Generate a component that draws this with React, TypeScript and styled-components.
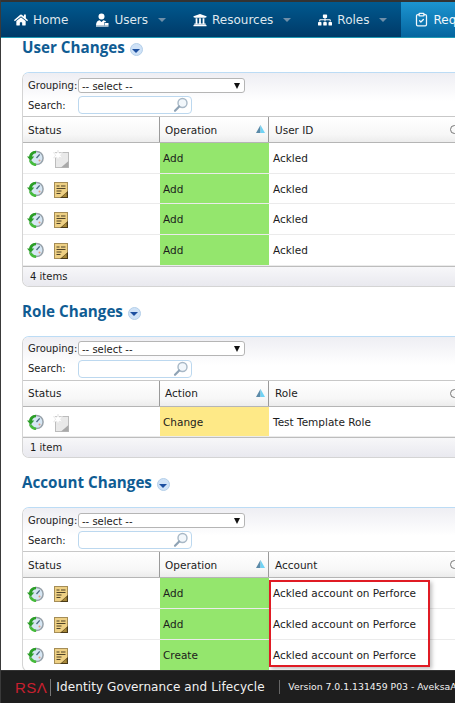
import React from 'react'
import styled, { createGlobalStyle } from 'styled-components'
import { FaHome, FaUniversity, FaSitemap } from 'react-icons/fa'
import { LuClipboardCheck } from 'react-icons/lu'

const GlobalStyle = createGlobalStyle`
  html, body { margin: 0; padding: 0; background: #fff; }
  body { font-family: "DejaVu Sans", "Liberation Sans", sans-serif; color: #1c1c1c; }
`

const UserIcon = () => (
  <svg width="14" height="14" viewBox="0 0 14 14" fill="#fff">
    <circle cx="6.5" cy="3.4" r="3" />
    <path d="M1 12.5c0-3 1.4-5 3.6-5.2L6.5 9l1.9-1.7c1.2.1 2.2.8 2.8 1.8L9 9.6v2.9z" />
    <rect x="9.5" y="10" width="4" height="2.5" />
    <rect x="1" y="12.6" width="12.5" height="1" />
  </svg>
)

const StatusIcon = () => (
  <svg width="17" height="17" viewBox="0 0 17 17">
    <circle cx="9.5" cy="8" r="6.6" fill="#d6e6f3" stroke="#98a2aa" strokeWidth="1.5" />
    <path d="M9.5 8l3.2-3.6" stroke="#4c6a80" strokeWidth="1.3" />
    <circle cx="12.5" cy="10.5" r="1" fill="#e49a7c" />
    <path d="M9 .8C5 .9 2.500 3.200 2.200 6.500L0 6.500l3.600 4.300 3.700-4.300H5.100C5.400 4.700 6.900 3.500 9 3.300z" fill="#2b9f27" />
    <path d="M1.800 9.500C2.300 13.400 5.200 16 9 16l.3-2.600c-2.200 0-3.900-1.200-4.700-3.100L3.600 11.500z" fill="#45bb3b" />
  </svg>
)

const NoteIcon = () => (
  <svg width="14" height="16" viewBox="0 0 14 16">
    <rect x="0.5" y="0.5" width="13" height="15" fill="#eed084" stroke="#a58d57" />
    <path d="M2.500 4h3M7 4h4.500M2.500 6.500h9M2.500 9h5M2.500 11.500h4" stroke="#4f4327" strokeWidth="1" />
    <path d="M14 9v7H6z" fill="#4a3a18" />
    <path d="M12.500 10.500L8 15h5z" fill="#a88838" />
  </svg>
)

const NewNoteIcon = () => (
  <svg width="18" height="18" viewBox="0 0 18 18">
    <rect x="3.500" y="2.500" width="13" height="15" fill="#e9e9e9" stroke="#bcbcbc" />
    <path d="M16.500 11v6.500H9z" fill="#a9a9a9" />
    <path d="M6 0l1.100 3.200L10.500 2.500 8.500 5.200 10.500 8 7.100 7.200 6 10.500 4.900 7.200 1.500 8 3.500 5.200 1.500 2.500 4.900 3.200z" fill="#fff" stroke="#e2e2e2" strokeWidth="0.6" />
  </svg>
)

const MagnifierIcon = () => (
  <svg width="16" height="16" viewBox="0 0 16 16" fill="none">
    <circle cx="9.500" cy="6" r="4.500" fill="#f2f7fb" stroke="#a8b8c6" strokeWidth="1.400" />
    <path d="M6.200 9.500L2 13.800" stroke="#8fa3b5" strokeWidth="2.200" strokeLinecap="round" />
  </svg>
)

const SortIcon = () => (
  <svg width="9" height="8" viewBox="0 0 9 8">
    <path d="M4.500 0L0 8h4.500z" fill="#5b8aa8" />
    <path d="M4.500 0L9 8H4.500z" fill="#6fd3f5" />
  </svg>
)

const navItems = [
  { label: 'Home', icon: <FaHome size={14} />, caret: false },
  { label: 'Users', icon: <UserIcon />, caret: true },
  { label: 'Resources', icon: <FaUniversity size={14} />, caret: true },
  { label: 'Roles', icon: <FaSitemap size={14} />, caret: true },
]

const sections = [
  {
    title: 'User Changes',
    opColumn: 'Operation',
    nameColumn: 'User ID',
    footer: '4 items',
    rows: [
      { op: 'Add', name: 'Ackled', isNew: true },
      { op: 'Add', name: 'Ackled' },
      { op: 'Add', name: 'Ackled' },
      { op: 'Add', name: 'Ackled' },
    ],
  },
  {
    title: 'Role Changes',
    opColumn: 'Action',
    nameColumn: 'Role',
    footer: '1 item',
    rows: [{ op: 'Change', name: 'Test Template Role', isNew: true, changed: true }],
  },
  {
    title: 'Account Changes',
    opColumn: 'Operation',
    nameColumn: 'Account',
    highlighted: true,
    rows: [
      { op: 'Add', name: 'Ackled account on Perforce' },
      { op: 'Add', name: 'Ackled account on Perforce' },
      { op: 'Create', name: 'Ackled account on Perforce' },
    ],
  },
]

const App = () => {
  return (
    <Page>
      <GlobalStyle />
      <NavBar>
        {navItems.map((item) => (
          <NavItem key={item.label}>
            <NavIcon>{item.icon}</NavIcon>
            {item.label}
            {item.caret && <Caret />}
          </NavItem>
        ))}
        <ActiveTab>
          <LuClipboardCheck size={15} />
          <span>Requests</span>
        </ActiveTab>
      </NavBar>

      <Main>
        {sections.map((section) => (
          <Section key={section.title}>
            <TitleRow>
              <Title>{section.title}</Title>
              <Toggle>
                <ToggleArrow />
              </Toggle>
            </TitleRow>
            <Card>
              <FilterPanel>
                <FilterRow>
                  <FilterLabel>Grouping:</FilterLabel>
                  <SelectBox>
                    -- select --
                    <SelectArrow />
                  </SelectBox>
                </FilterRow>
                <FilterRow>
                  <FilterLabel>Search:</FilterLabel>
                  <SearchBox>
                    <MagnifierIcon />
                  </SearchBox>
                </FilterRow>
              </FilterPanel>
              <HeaderRow>
                <HeaderCell>Status</HeaderCell>
                <HeaderCell>
                  {section.opColumn}
                  <SortSlot>
                    <SortIcon />
                  </SortSlot>
                </HeaderCell>
                <NameHeader>
                  {section.nameColumn}
                  <ColumnMenu />
                </NameHeader>
              </HeaderRow>
              <Body>
                {section.rows.map((row, i) => (
                  <Row key={i}>
                    <StatusCell>
                      <StatusIcon />
                      <NoteSlot>{row.isNew ? <NewNoteIcon /> : <NoteIcon />}</NoteSlot>
                    </StatusCell>
                    <OpCell $changed={row.changed}>{row.op}</OpCell>
                    <NameCell>{row.name}</NameCell>
                  </Row>
                ))}
                {section.highlighted && <RedBox />}
              </Body>
              {section.footer && <CardFooter>{section.footer}</CardFooter>}
            </Card>
          </Section>
        ))}
      </Main>

      <FooterBar>
        <Logo>RSΛ</Logo>
        <ProductName>Identity Governance and Lifecycle</ProductName>
        <VersionText>Version 7.0.1.131459 P03 - AveksaAdmin</VersionText>
      </FooterBar>
    </Page>
  )
}

const Page = styled.div`
  width: 455px;
  height: 703px;
  display: flex;
  flex-direction: column;
  overflow: hidden;
  background: #fff;
  border-left: 1px solid #3a3a3a;
  box-sizing: border-box;
`

const NavBar = styled.nav`
  flex: none;
  height: 38px;
  box-sizing: border-box;
  border-top: 2px solid #333;
  border-bottom: 1px solid #1f9bb5;
  background: linear-gradient(#00598f, #003a68);
  display: flex;
  align-items: stretch;
  padding-left: 13px;
  color: #dfe7ee;
  font-size: 12px;
  white-space: nowrap;
`

const NavItem = styled.div`
  display: flex;
  align-items: center;
  margin-right: 27px;
`

const NavIcon = styled.span`
  display: flex;
  color: #fff;
  margin-right: 5px;
`

const Caret = styled.span`
  width: 0;
  height: 0;
  margin-left: 10px;
  border-left: 4px solid transparent;
  border-right: 4px solid transparent;
  border-top: 4px solid #6f8fa9;
`

const ActiveTab = styled.div`
  margin-left: -13px;
  padding-left: 13px;
  flex: 1;
  display: flex;
  align-items: center;
  gap: 4px;
  background: linear-gradient(#1c95d1, #05659f);
  color: #f2f7fb;
  overflow: hidden;
  svg {
    flex: none;
  }
`

const Main = styled.main`
  flex: 1;
  min-height: 0;
  overflow: hidden;
  padding-left: 21px;
`

const Section = styled.section`
  width: 470px;
  margin-bottom: 15px;
`

const TitleRow = styled.div`
  height: 34px;
  display: flex;
  align-items: flex-start;
  gap: 5px;
`

const Title = styled.h2`
  margin: 0;
  font-family: "Open Sans", "Liberation Sans", sans-serif;
  font-size: 15.200px;
  line-height: 18px;
  font-weight: 700;
  color: #0f5c93;
`

const Toggle = styled.span`
  margin-top: 5px;
  width: 13px;
  height: 13px;
  border-radius: 50%;
  background: #cfe2f7;
  border: 1px solid #b4cfe9;
  box-sizing: border-box;
  display: flex;
  align-items: center;
  justify-content: center;
`

const ToggleArrow = styled.span`
  width: 0;
  height: 0;
  margin-top: 2px;
  border-left: 4px solid transparent;
  border-right: 4px solid transparent;
  border-top: 4px solid #1c4fa0;
`

const Card = styled.div`
  border: 1px solid #d4d4d4;
  border-top-color: #bcdcf5;
  border-radius: 7px 0 0 7px;
  overflow: hidden;
  background: #fff;
`

const FilterPanel = styled.div`
  height: 43px;
  box-sizing: border-box;
  padding: 4px 0 0 5px;
  background: linear-gradient(#eeeef3, #fff 65%);
  display: flex;
  flex-direction: column;
  gap: 4px;
`

const FilterRow = styled.div`
  display: flex;
  align-items: center;
  height: 16px;
`

const FilterLabel = styled.span`
  width: 50px;
  font-size: 10px;
  color: #222;
`

const SelectBox = styled.div`
  position: relative;
  width: 167px;
  height: 15px;
  box-sizing: border-box;
  border: 1px solid #b5b5b5;
  border-radius: 3px;
  background: #fff;
  font-size: 10px;
  line-height: 15px;
  padding-left: 3px;
`

const SelectArrow = styled.span`
  position: absolute;
  right: 4px;
  top: 4px;
  width: 0;
  height: 0;
  border-left: 3.500px solid transparent;
  border-right: 3.500px solid transparent;
  border-top: 6px solid #111;
`

const SearchBox = styled.div`
  width: 114px;
  height: 18px;
  box-sizing: border-box;
  border: 1px solid #bcd8ef;
  border-radius: 4px;
  background: #fff;
  display: flex;
  align-items: center;
  justify-content: flex-end;
  padding-right: 2px;
`

const HeaderRow = styled.div`
  height: 27px;
  box-sizing: border-box;
  display: grid;
  grid-template-columns: 137px 109px 1fr;
  border-top: 1px solid #c8c8c8;
  border-bottom: 1px solid #b5b5b5;
  background: linear-gradient(#fff, #f7f7f7 70%, #ececec);
  font-size: 10.500px;
`

const HeaderCell = styled.div`
  position: relative;
  display: flex;
  align-items: center;
  padding-left: 5px;
  border-right: 1px solid #9a9a9a;
`

const NameHeader = styled(HeaderCell)`
  border-right: 0;
  padding-left: 6px;
`

const SortSlot = styled.span`
  position: absolute;
  right: 3px;
  top: 8px;
  display: flex;
`

const ColumnMenu = styled.span`
  position: absolute;
  left: 181px;
  top: 8px;
  width: 7px;
  height: 7px;
  border: 1px solid #777;
  border-radius: 50%;
`

const Body = styled.div`
  position: relative;
`

const Row = styled.div`
  height: 30.700px;
  box-sizing: border-box;
  display: grid;
  grid-template-columns: 137px 109px 1fr;
  border-bottom: 1px solid #ebebeb;
  font-size: 10.500px;
`

const StatusCell = styled.div`
  display: flex;
  align-items: center;
  padding: 2px 0 0 4px;
`

const NoteSlot = styled.span`
  width: 22px;
  height: 18px;
  margin-left: 6px;
  display: flex;
  align-items: center;
  justify-content: center;
`

const OpCell = styled.div<{ $changed?: boolean }>`
  display: flex;
  align-items: center;
  padding-left: 3px;
  background: ${({ $changed }) => ($changed ? '#fee987' : '#94e66d')};
`

const NameCell = styled.div`
  display: flex;
  align-items: center;
  padding-left: 4px;
`

const RedBox = styled.div`
  position: absolute;
  left: 246px;
  top: 2px;
  width: 161px;
  height: 87px;
  box-sizing: border-box;
  border: 2px solid #e01b24;
  box-shadow: 2px 2px 4px rgba(0, 0, 0, 0.25);
`

const CardFooter = styled.div`
  height: 20px;
  box-sizing: border-box;
  padding-left: 7px;
  border-top: 1px solid #bdbdbd;
  background: linear-gradient(#f7f7f9, #e9e9ef);
  font-size: 10px;
  line-height: 19px;
`

const FooterBar = styled.footer`
  flex: none;
  height: 33px;
  background: #1e1e1e;
  border-top: 1px solid #333;
  box-sizing: border-box;
  display: flex;
  align-items: center;
  padding-left: 14px;
  color: #f1f1f1;
  white-space: nowrap;
`

const Logo = styled.span`
  font-family: "Liberation Sans", sans-serif;
  font-size: 15px;
  letter-spacing: 0.5px;
  color: #c8202f;
  padding-right: 3px;
  margin-right: 5px;
  border-right: 1px solid #777;
`

const ProductName = styled.span`
  width: 223px;
  font-size: 12px;
  letter-spacing: 0.1px;
  flex: none;
`

const VersionText = styled.span`
  border-left: 1px solid #666;
  padding-left: 8px;
  font-size: 9.300px;
  line-height: 14px;
`

export default App
